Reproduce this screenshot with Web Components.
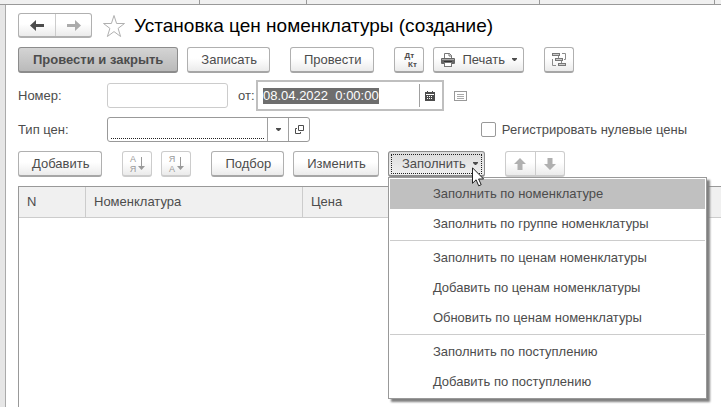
<!DOCTYPE html>
<html lang="ru">
<head>
<meta charset="utf-8">
<title>Установка цен номенклатуры</title>
<style>
body {
  margin: 0;
  font: 13px/16px "Liberation Sans", Arial, sans-serif;
  color: #4c4c4c;
  background: #fff;
}
</style>
</head>
<body>
<price-document></price-document>

<script>
const icons = {
  back: `<svg width="14" height="12"><path d="M6 1v4h8v3H6v4L0 6.5z" fill="#4c4c4c"/></svg>`,
  forward: `<svg width="14" height="12"><path d="M8 1v4H0v3h8v4l6-5.5z" fill="#ababab"/></svg>`,
  star: `<svg width="24" height="24"><path d="M13 1.5l2.600 8h7.900l-6.400 4.900 2.500 8.100-6.600-4.900-6.600 4.900 2.500-8.100L2.500 9.500h7.900z" fill="#fff" stroke="#b0b0b0"/></svg>`,
  print: `<svg width="14" height="14"><path d="M3.5 5V.5h5l2 2V5" fill="#fff" stroke="#777"/><path d="M8 0v3h3" fill="none" stroke="#777"/><rect y="5" width="14" height="6" rx="1" fill="#666"/><path d="M1 6.5h12" stroke="#aaa"/><path d="M3 8.5h8" stroke="#333"/><rect x="3.5" y="9.5" width="7" height="4" fill="#fff" stroke="#777"/></svg>`,
  tree: `<svg width="15" height="15"><g fill="#ccc" stroke="#777"><rect x=".5" y="1.5" width="7" height="2"/><rect x="3.5" y="6.5" width="7" height="2"/><rect x="6.5" y="11.5" width="7" height="2"/></g><path d="M10 1.5h3.5v6H12M.5 7v6.5H4M6.5 4v2M9.5 9v2" fill="none" stroke="#8c8c8c"/></svg>`,
  calendar: `<svg width="10" height="10"><path d="M0 1h10v9H0zM2 0h1v2H2zM7 0h1v2H7z" fill="#4c4c4c"/><path d="M1 3.5h8" stroke="#fff"/><path d="M2 5.5h6M2 7.5h6" stroke="#fff" stroke-dasharray="1 1"/></svg>`,
  list: `<svg width="13" height="10"><rect x=".5" y=".5" width="12" height="9" fill="#fff" stroke="#999"/><path d="M3 3.5h7M3 5.5h7M3 7.5h7" stroke="#aaa"/></svg>`,
  open: `<svg width="9" height="9"><path d="M3.5.5h5v5h-5zM2 3.5H.5v5h5V7" fill="none" stroke="#4c4c4c"/></svg>`,
  caret: `<svg width="5" height="3"><path d="M0 0h5v1L3 3H2L0 1z" fill="#4c4c4c"/></svg>`,
  down: `<svg width="7" height="14"><path d="M3.5 0v11" stroke="#999"/><path d="M0 9h7l-3.5 4z" fill="#999"/></svg>`,
  moveUp: `<svg width="12" height="12"><path d="M6 0l6 6H8.5v6h-5V6H0z" fill="#b0b0b0"/></svg>`,
  moveDown: `<svg width="12" height="12"><path d="M6 12l6-6H8.5V0h-5v6H0z" fill="#b0b0b0"/></svg>`,
  pointer: `<svg width="13" height="20"><path d="M.5.8v15.5l3.6-3.5 2.6 6 2.5-1.1-2.6-5.7h5z" fill="#fff" stroke="#222"/></svg>`
};

class UiIcon extends HTMLElement {
  constructor() {
    super();
    this.attachShadow({ mode: "open" });
  }

  connectedCallback() {
    this.shadowRoot.innerHTML = `
      <style>
        :host { display: inline-flex; flex: none; }
        svg { display: block; }
      </style>
      ${icons[this.getAttribute("name")]}
    `;
  }
}

class UiButton extends HTMLElement {
  constructor() {
    super();
    this.attachShadow({ mode: "open" });
  }

  connectedCallback() {
    const label = this.getAttribute("label");
    this.shadowRoot.innerHTML = `
      <style>
        :host { display: block; flex: none; }
        button {
          display: flex;
          align-items: center;
          justify-content: center;
          gap: 7px;
          box-sizing: border-box;
          height: 26px;
          width: 100%;
          padding: 0 12px 0 13px;
          border: 1px solid #b0b0b0;
          border-bottom: 2px solid #a6a6a6;
          border-radius: 3px;
          background: linear-gradient(#fff 45%, #ebebeb);
          color: inherit;
          font: inherit;
          white-space: nowrap;
        }
        :host([primary]) button {
          padding: 0 14px;
          font-weight: bold;
          border-color: #8c8c8c;
          background: linear-gradient(#d4d4d4, #bababa);
        }
        :host([square]) { width: 30px; }
        :host([square]) button { padding: 0; gap: 2px; }
        :host([faded]) button { border-color: #ccc; color: #999; }
        :host([pressed]) button {
          border-color: #8c8c8c;
          background: linear-gradient(#dcdcdc, #f0f0f0);
          outline: 1px dotted #222;
          outline-offset: -4px;
        }
        :host([menu]) button { padding-right: 6px; }
        :host([icon]) button { padding-left: 7px; }
      </style>
      <button type="button" ${label ? `aria-label="${label}"` : ""}><slot></slot></button>
    `;
  }
}

class ButtonPair extends HTMLElement {
  constructor() {
    super();
    this.attachShadow({ mode: "open" });
  }

  connectedCallback() {
    const names = this.getAttribute("icons").split(" ");
    const labels = this.getAttribute("labels").split(",");
    this.shadowRoot.innerHTML = `
      <style>
        :host {
          display: inline-flex;
          flex: none;
          box-sizing: border-box;
          border: 1px solid var(--pair-border, #b0b0b0);
          border-bottom-width: 2px;
          border-radius: 3px;
          background: linear-gradient(#fff 45%, #ebebeb);
        }
        button {
          display: flex;
          align-items: center;
          justify-content: center;
          width: var(--pair-width, 36px);
          height: var(--pair-height, 22px);
          padding: 0;
          border: 0;
          background: none;
        }
        button + button { border-left: 1px solid #ccc; }
      </style>
      ${names.map((n, i) => `<button type="button" aria-label="${labels[i]}"><ui-icon name="${n}"></ui-icon></button>`).join("")}
    `;
  }
}

class FormField extends HTMLElement {
  constructor() {
    super();
    this.attachShadow({ mode: "open" });
  }

  connectedCallback() {
    const buttons = (this.getAttribute("buttons") || "").split(" ").filter(Boolean);
    this.shadowRoot.innerHTML = `
      <style>
        :host { display: flex; align-items: center; flex: none; }
        label { width: var(--label-width, 89px); flex: none; }
        .box {
          display: flex;
          box-sizing: border-box;
          width: var(--box-width, 121px);
          height: 25px;
          border: 1px solid #ccc;
          border-radius: 3px;
          background: #fff;
        }
        input {
          flex: 1;
          min-width: 0;
          margin: 3px;
          padding: 0;
          border: 0;
          outline: 0;
          background: none;
          color: inherit;
          font: inherit;
        }
        button {
          display: flex;
          align-items: center;
          justify-content: center;
          width: 21px;
          padding: 0;
          border: 0;
          border-left: 1px solid #a0a0a0;
          background: none;
        }
        :host([required]) .box { border-color: #999; }
        :host([required]) input { margin-bottom: 2px; border-bottom: 1px dotted #222; }
        :host([active]) .box {
          height: 31px;
          padding: 2px;
          border: 2px solid #bfbfbf;
          border-radius: 0;
        }
        ::selection { background: #6e6e6e; color: #fff; }
      </style>
      <label for="field">${this.getAttribute("label")}</label>
      <div class="box">
        <input id="field" type="text" value="${this.getAttribute("value") || ""}">
        ${buttons.map(n => `<button type="button" aria-label="${n}"><ui-icon name="${n}"></ui-icon></button>`).join("")}
      </div>
    `;
    if (this.hasAttribute("active")) {
      const input = this.shadowRoot.querySelector("input");
      input.focus();
      input.select();
    }
  }
}

class CheckField extends HTMLElement {
  constructor() {
    super();
    this.attachShadow({ mode: "open" });
    this.shadowRoot.innerHTML = `
      <style>
        :host { display: block; }
        label { display: flex; align-items: center; gap: 6px; white-space: nowrap; }
        input {
          appearance: none;
          width: 15px;
          height: 15px;
          margin: 0;
          border: 1px solid #999;
          border-radius: 2px;
          background: #fff;
        }
        input:checked { background: #999; }
      </style>
      <label><input type="checkbox"><slot></slot></label>
    `;
  }
}

class MenuItem extends HTMLElement {
  constructor() {
    super();
    this.attachShadow({ mode: "open" });
    this.shadowRoot.innerHTML = `
      <style>
        :host { display: block; }
        :host([divided]) { margin-top: 1px; padding-top: 2px; border-top: 1px solid #ccc; }
        button {
          display: block;
          width: 100%;
          height: 30px;
          padding: 0 0 0 43px;
          border: 0;
          background: none;
          color: inherit;
          font: inherit;
          text-align: left;
          white-space: nowrap;
        }
        :host([current]) button { background: #c0c0c0; }
      </style>
      <button type="button" role="menuitem"><slot></slot></button>
    `;
  }
}

class MenuButton extends HTMLElement {
  constructor() {
    super();
    this.attachShadow({ mode: "open" });
  }

  connectedCallback() {
    this.shadowRoot.innerHTML = `
      <style>
        :host { display: block; position: relative; flex: none; }
        .menu {
          position: absolute;
          z-index: 1;
          top: 100%;
          left: 0;
          box-sizing: border-box;
          width: 319px;
          padding: 1px;
          border: 1px solid #999;
          background: #fff;
          box-shadow: 3px 3px 2px #808080;
        }
        .pointer { position: absolute; z-index: 2; right: 0; top: 16px; pointer-events: none; }
      </style>
      <ui-button pressed menu>${this.getAttribute("label")}<ui-icon name="caret"></ui-icon></ui-button>
      <div class="menu" role="menu"><slot></slot></div>
      <ui-icon class="pointer" name="pointer"></ui-icon>
    `;
    this.menu = this.shadowRoot.querySelector(".menu");
    this.shadowRoot.querySelector("ui-button").addEventListener("click", () => {
      this.menu.hidden = !this.menu.hidden;
      this.menu.style.display = this.menu.hidden ? "none" : "";
    });
  }
}

class PriceTable extends HTMLElement {
  constructor() {
    super();
    this.attachShadow({ mode: "open" });
    this.shadowRoot.innerHTML = `
      <style>
        :host {
          display: block;
          flex: 1;
          border: 1px solid #999;
          border-width: 1px 0 0 1px;
        }
        table { width: 100%; border-collapse: separate; border-spacing: 0; table-layout: fixed; }
        th {
          box-sizing: border-box;
          height: 31px;
          padding: 0 8px;
          border-bottom: 1px solid #ccc;
          background: #f0f0f0;
          font-weight: normal;
          text-align: left;
        }
        th + th { border-left: 1px solid #ccc; }
        .n { width: 66px; }
        .item { width: 217px; }
      </style>
      <table>
        <thead><tr><th class="n">N</th><th class="item">Номенклатура</th><th>Цена</th></tr></thead>
        <tbody></tbody>
      </table>
    `;
  }
}

class PriceDocument extends HTMLElement {
  constructor() {
    super();
    this.attachShadow({ mode: "open" });
  }

  connectedCallback() {
    this.shadowRoot.innerHTML = `
      <style>
        :host { display: flex; flex-direction: column; min-height: 100vh; }
        .tabs {
          display: grid;
          grid-template-columns: 199px 107px 233px 175px 1fr;
          height: 4px;
          border-bottom: 1px solid #999;
          background: #f0f0f0;
        }
        .tabs i + i { border-left: 1px solid #999; }
        .frame { display: flex; flex: 1; flex-direction: column; background: linear-gradient(90deg, #e6e6e6 5px, #fff 5px); }
        .page {
          display: flex;
          flex: 1;
          flex-direction: column;
          border-left: 1px solid #aaa;
          margin-left: 5px;
          padding: 8px 0 0 12px;
        }
        .row { display: flex; align-items: center; }
        .title { gap: 9px; height: 25px; }
        h1 { margin: 0; font-size: 19px; line-height: 24px; font-weight: normal; color: #000; white-space: nowrap; }
        .bar { gap: 20px; height: 26px; }
        .group { display: flex; gap: 9px; }
        .commands { margin-top: 9px; }
        .fields { margin-top: 7px; height: 31px; gap: 10px; }
        .types { margin-top: 6px; height: 25px; justify-content: space-between; padding-right: 34px; }
        .tools { margin-top: 9px; margin-bottom: 9px; }
        .date { --label-width: 18px; --box-width: 188px; }
        .type { --box-width: 203px; }
        .move { --pair-width: 29px; --pair-height: 23px; --pair-border: #ccc; }
        .posting { display: grid; font-size: 8px; line-height: 9px; font-weight: bold; }
        .posting span + span { padding-left: 6px; }
        .letters { display: grid; font-size: 9px; line-height: 10px; }
      </style>
      <div class="tabs"><i></i><i></i><i></i><i></i><i></i></div>
      <div class="frame">
      <main class="page">
        <div class="row title">
          <button-pair icons="back forward" labels="Назад,Вперед"></button-pair>
          <ui-icon name="star"></ui-icon>
          <h1>Установка цен номенклатуры (создание)</h1>
        </div>
        <div class="row bar commands">
          <div class="group">
            <ui-button primary>Провести и закрыть</ui-button>
            <ui-button>Записать</ui-button>
          </div>
          <ui-button>Провести</ui-button>
          <div class="group">
            <ui-button square><span class="posting"><span>Дт</span><span>Кт</span></span></ui-button>
            <ui-button menu icon><ui-icon name="print"></ui-icon>Печать<ui-icon name="caret"></ui-icon></ui-button>
          </div>
          <ui-button square label="Структура подчиненности"><ui-icon name="tree"></ui-icon></ui-button>
        </div>
        <div class="row fields">
          <form-field label="Номер:"></form-field>
          <form-field class="date" label="от:" value="08.04.2022  0:00:00" buttons="calendar" active></form-field>
          <ui-icon name="list"></ui-icon>
        </div>
        <div class="row types">
          <form-field class="type" label="Тип цен:" buttons="caret open" required></form-field>
          <check-field>Регистрировать нулевые цены</check-field>
        </div>
        <div class="row bar tools">
          <ui-button>Добавить</ui-button>
          <div class="group">
            <ui-button square faded><span class="letters"><span>А</span><span>Я</span></span><ui-icon name="down"></ui-icon></ui-button>
            <ui-button square faded><span class="letters"><span>Я</span><span>А</span></span><ui-icon name="down"></ui-icon></ui-button>
          </div>
          <div class="group">
            <ui-button>Подбор</ui-button>
            <ui-button>Изменить</ui-button>
            <menu-button label="Заполнить">
              <menu-item current>Заполнить по номенклатуре</menu-item>
              <menu-item>Заполнить по группе номенклатуры</menu-item>
              <menu-item divided>Заполнить по ценам номенклатуры</menu-item>
              <menu-item>Добавить по ценам номенклатуры</menu-item>
              <menu-item>Обновить по ценам номенклатуры</menu-item>
              <menu-item divided>Заполнить по поступлению</menu-item>
              <menu-item>Добавить по поступлению</menu-item>
            </menu-button>
          </div>
          <button-pair class="move" icons="moveUp moveDown" labels="Вверх,Вниз"></button-pair>
        </div>
        <price-table></price-table>
      </main>
      </div>
    `;
  }
}

customElements.define("ui-icon", UiIcon);
customElements.define("ui-button", UiButton);
customElements.define("button-pair", ButtonPair);
customElements.define("form-field", FormField);
customElements.define("check-field", CheckField);
customElements.define("menu-item", MenuItem);
customElements.define("menu-button", MenuButton);
customElements.define("price-table", PriceTable);
customElements.define("price-document", PriceDocument);
</script>
</body>
</html>
